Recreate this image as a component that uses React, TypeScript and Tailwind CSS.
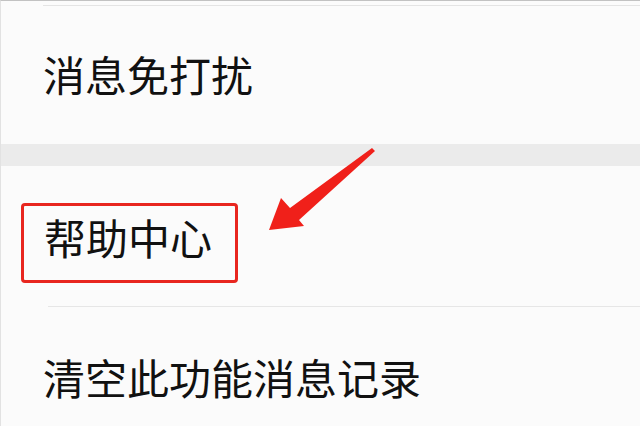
import React from 'react'

const cjk = { fontFamily: '"Noto Sans CJK SC", "Noto Sans", sans-serif' }

function Arrow() {
  // red pointer drawn over the list, aimed at the help item
  return (
    <svg className="absolute left-0 top-0 pointer-events-none" width="640" height="426" viewBox="0 0 640 426">
      <polygon
        points="268,229 280,197 289,207 371,147 374,150 298,219 303,225"
        fill="#f0201a"
      />
    </svg>
  )
}

export default function App() {
  return (
    <div
      className="relative w-[640px] h-[426px] overflow-hidden bg-[#fbfbfb] border-t border-l border-t-[#c2c2c2] border-l-[#e2e2e2] text-[#111]"
      style={cjk}
    >
      <div className="pt-[4px]">
        <div className="ml-[42px] h-px bg-[#e4e4e4]" />
      </div>

      {/* row 1 */}
      <div className="h-[138px] pt-[47px] pl-[42px]">
        <span className="block text-[42px] leading-none">消息免打扰</span>
      </div>

      <div className="h-[22px] bg-[#ebebeb]" />

      {/* row 2 */}
      <div className="h-[140px] pt-[37px] pl-[20px]">
        <div className="w-[217px] h-[80px] border-[3px] border-[#e8261f] rounded-[4px] pl-[20px] pt-[10px]">
          <span className="block text-[42px] leading-none">帮助中心</span>
        </div>
      </div>

      <div className="ml-[47px] h-px bg-[#e6e6e6]" />

      {/* row 3 */}
      <div className="pt-[49px] pl-[42px]">
        <span className="block text-[42px] leading-none">清空此功能消息记录</span>
      </div>

      <Arrow />
    </div>
  )
}
